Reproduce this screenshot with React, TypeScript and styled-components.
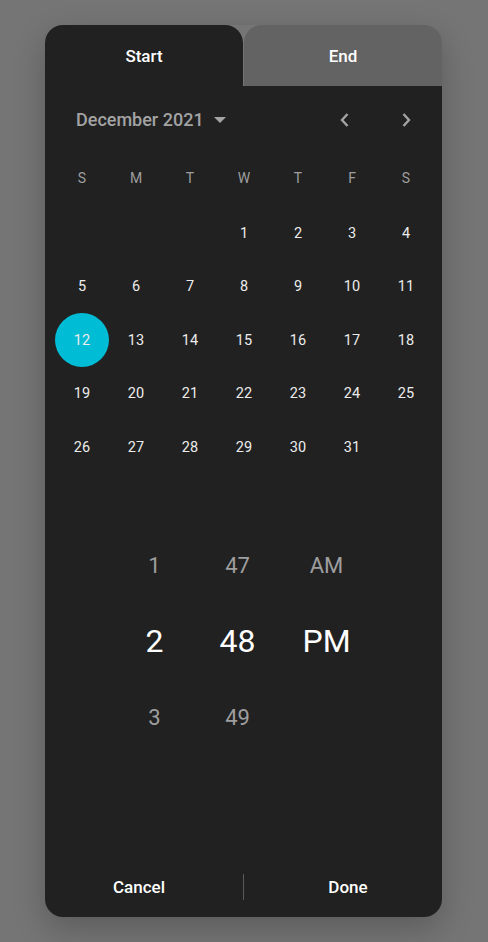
import React from 'react';
import styled, { createGlobalStyle } from 'styled-components';

const GlobalStyle = createGlobalStyle`
  html, body {
    margin: 0;
    padding: 0;
    background: #757575;
    font-family: Roboto, "Noto Sans", sans-serif;
  }
`;

const Page = styled.div`
  width: 100%;
  height: 100vh;
  display: flex;
  align-items: center;
  padding-left: 45px;
  box-sizing: border-box;
`;

const Dialog = styled.div`
  width: 397px;
  height: 892px;
  display: flex;
  flex-direction: column;
  border-radius: 18px;
  box-shadow: 0 12px 32px rgba(0, 0, 0, 0.22);
`;

const Tabs = styled.div`
  display: grid;
  grid-template-columns: 1fr 1fr;
  gap: 1px;
  height: 61px;
`;

const Tab = styled.div<{ $active?: boolean }>`
  display: flex;
  align-items: center;
  justify-content: center;
  border-radius: 18px 18px 0 0;
  background: ${(p) => (p.$active ? '#212121' : '#636363')};
  color: #fff;
  font-size: 17px;
  font-weight: 500;
`;

const Body = styled.div`
  flex: 1;
  display: flex;
  flex-direction: column;
  background: #212121;
  border-radius: 0 0 18px 18px;
  padding: 0 10px;
`;

const Header = styled.div`
  height: 67px;
  display: flex;
  align-items: center;
  gap: 9px;
  padding: 0 0 0 21px;
`;

const MonthLabel = styled.div`
  display: flex;
  align-items: center;
  gap: 10px;
  color: #a3a3a3;
  font-size: 18px;
  font-weight: 500;
  flex: 1;
`;

const NavButton = styled.div`
  width: 52px;
  height: 40px;
  display: flex;
  align-items: center;
  justify-content: center;
`;

const Grid = styled.div`
  display: grid;
  grid-template-columns: repeat(7, 1fr);
  grid-auto-rows: 53.5px;
`;

const WeekDay = styled.div`
  height: 48px;
  padding-top: 1px;
  box-sizing: border-box;
  display: flex;
  align-items: center;
  justify-content: center;
  color: #9e9e9e;
  font-size: 14px;
`;

const Day = styled.div<{ $selected?: boolean }>`
  display: flex;
  align-items: center;
  justify-content: center;
  color: #ececec;
  font-size: 14.5px;
  span {
    width: 54px;
    height: 54px;
    border-radius: 50%;
    display: flex;
    align-items: center;
    justify-content: center;
    background: ${(p) => (p.$selected ? '#00bcd4' : 'transparent')};
  }
`;

const Time = styled.div`
  margin-top: 53px;
  display: grid;
  grid-template-columns: 80px 86px 92px;
  grid-auto-rows: 76px;
  justify-content: center;
`;

const TimeCell = styled.div<{ $current?: boolean }>`
  display: flex;
  align-items: center;
  justify-content: center;
  color: ${(p) => (p.$current ? '#ffffff' : '#9e9e9e')};
  font-size: ${(p) => (p.$current ? '32px' : '22px')};
`;

const Spacer = styled.div`
  flex: 1;
`;

const Footer = styled.div`
  height: 60px;
  margin: 0 -10px;
  display: grid;
  grid-template-columns: 1fr 1px 1fr;
  gap: 10px;
  align-items: center;
`;

const FooterButton = styled.div`
  text-align: center;
  color: #fff;
  font-size: 17px;
  font-weight: 500;
`;

const Divider = styled.div`
  height: 26px;
  background: #5a5a5a;
`;

const Chevron = ({ dir }: { dir: 'left' | 'right' }) => (
  <svg width="12" height="16" viewBox="0 0 12 16">
    <path
      d={dir === 'left' ? 'M8.5 2 L3 8 L8.5 14' : 'M3.5 2 L9 8 L3.5 14'}
      fill="none"
      stroke="#a3a3a3"
      strokeWidth="2.4"
    />
  </svg>
);

const weekDays = ['S', 'M', 'T', 'W', 'T', 'F', 'S'];
const days: (number | null)[] = [null, null, null];
for (let d = 1; d <= 31; d++) days.push(d);

export default function App() {
  return (
    <Page>
      <GlobalStyle />
      <Dialog>
        <Tabs>
          <Tab $active>Start</Tab>
          <Tab>End</Tab>
        </Tabs>
        <Body>
          <Header>
            <MonthLabel>
              December 2021
              <svg width="12" height="6" viewBox="0 0 12 6">
                <path d="M0 0 L12 0 L6 6 Z" fill="#a3a3a3" />
              </svg>
            </MonthLabel>
            <NavButton>
              <Chevron dir="left" />
            </NavButton>
            <NavButton>
              <Chevron dir="right" />
            </NavButton>
          </Header>
          <Grid>
            {weekDays.map((w, i) => (
              <WeekDay key={i}>{w}</WeekDay>
            ))}
            {days.map((d, i) => (
              <Day key={i} $selected={d === 12}>
                {d && <span>{d}</span>}
              </Day>
            ))}
          </Grid>
          <Time>
            <TimeCell>1</TimeCell>
            <TimeCell>47</TimeCell>
            <TimeCell>AM</TimeCell>
            <TimeCell $current>2</TimeCell>
            <TimeCell $current>48</TimeCell>
            <TimeCell $current>PM</TimeCell>
            <TimeCell>3</TimeCell>
            <TimeCell>49</TimeCell>
            <TimeCell />
          </Time>
          <Spacer />
          <Footer>
            <FooterButton>Cancel</FooterButton>
            <Divider />
            <FooterButton>Done</FooterButton>
          </Footer>
        </Body>
      </Dialog>
    </Page>
  );
}
